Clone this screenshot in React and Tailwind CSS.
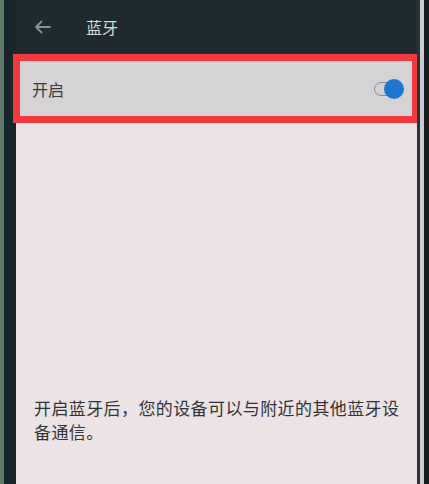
export default function App() {
  const font = { fontFamily: '"Noto Sans CJK SC", "Noto Sans", sans-serif' };

  return (
    <div className="flex h-[484px] w-[429px] overflow-hidden bg-[#1b2527]" style={font}>
      {/* left bezel */}
      <div className="w-[4px] bg-[#5f7a6a]" />
      <div className="w-[12px] bg-[#18262a]" />

      <div className="flex min-w-0 flex-1 flex-col">
        {/* header */}
        <div className="flex h-[54px] items-center bg-[#1e2a2d] pl-[18px]">
          <svg width="18" height="14" viewBox="0 0 18 14" fill="none" stroke="#8b9294" strokeWidth="1.8" strokeLinecap="round" strokeLinejoin="round">
            <path d="M16 7H2M7.5 1.5L2 7l5.5 5.5" />
          </svg>
          <span className="ml-[34px] text-[16px] text-[#d9dcdc]">蓝牙</span>
        </div>

        {/* highlighted row */}
        <div className="-ml-[3px] mr-[-2px] border-[7px] border-[#f2393b] bg-[#d6d3d6]">
          <div className="flex h-[55px] items-center justify-between pl-[12px] pr-[8px]">
            <span className="text-[16px] text-[#3a3a3c]">开启</span>
            <div className="relative h-[20px] w-[30px]">
              <div className="absolute left-0 top-[3px] h-[14px] w-[24px] rounded-full border border-[#8a8c96]" />
              <div className="absolute right-0 top-0 h-[20px] w-[20px] rounded-full bg-[#1e76d0]" />
            </div>
          </div>
        </div>

        {/* body */}
        <div className="flex flex-1 flex-col justify-end bg-[#ebe3e5] pl-[18px] pb-[40px]">
          <p className="whitespace-nowrap text-[17px] leading-[24px] tracking-[0.4px] text-[#333335]">
            开启蓝牙后，您的设备可以与附近的其他蓝牙设
            <br />
            备通信。
          </p>
        </div>
      </div>

      {/* right bezel */}
      <div className="w-[3px] bg-[#2a3436]" />
      <div className="w-[4px] bg-[#c9cdd0]" />
      <div className="w-[5px] bg-[#141c1e]" />
    </div>
  );
}
